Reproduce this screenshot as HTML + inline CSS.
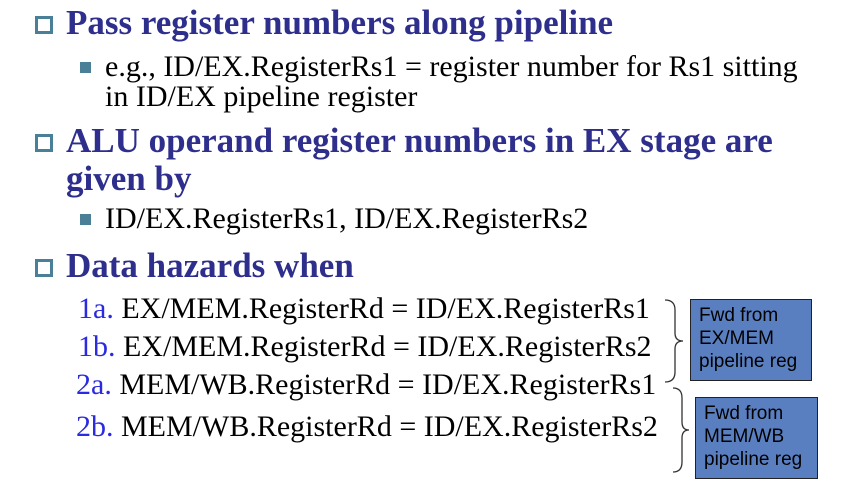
<!DOCTYPE html>
<html><head><meta charset="utf-8"><style>
body{margin:0;width:846px;height:495px;background:#fff;position:relative;overflow:hidden;font-family:"Liberation Serif",serif}
.t{position:absolute;white-space:nowrap;line-height:1}
.h{font-size:35px;font-weight:bold;color:#2e2e8c;left:66px}
.s{font-size:30px;color:#000;left:105px}
.n{font-size:30px;color:#000}
.n b{font-weight:normal;color:#2a2ae0}
.hb{position:absolute;left:35px;width:12px;height:12px;border:3px solid #4a8097;background:#fff}
.sb{position:absolute;left:80px;width:11px;height:11px;background:#4a8097}
.box{position:absolute;background:#5a7fc0;border:1.5px solid #222;font-family:"Liberation Sans",sans-serif;font-size:19px;line-height:23px;color:#000;padding:4px 0 0 8px;box-sizing:border-box}
</style></head><body>
<div class="hb" style="top:16px"></div>
<div class="t h" style="top:5px">Pass register numbers along pipeline</div>
<div class="sb" style="top:62px"></div>
<div class="t s" style="top:52px">e.g., ID/EX.RegisterRs1 = register number for Rs1 sitting</div>
<div class="t s" style="top:82px">in ID/EX pipeline register</div>
<div class="hb" style="top:134px"></div>
<div class="t h" style="top:123px">ALU operand register numbers in EX stage are</div>
<div class="t h" style="top:161px">given by</div>
<div class="sb" style="top:214px"></div>
<div class="t s" style="top:204px">ID/EX.RegisterRs1, ID/EX.RegisterRs2</div>
<div class="hb" style="top:259px"></div>
<div class="t h" style="top:248px">Data hazards when</div>
<div class="t n" style="top:294px;left:78px"><b>1a.</b> EX/MEM.RegisterRd = ID/EX.RegisterRs1</div>
<div class="t n" style="top:332px;left:78px"><b>1b.</b> EX/MEM.RegisterRd = ID/EX.RegisterRs2</div>
<div class="t n" style="top:370px;left:76px"><b>2a.</b> MEM/WB.RegisterRd = ID/EX.RegisterRs1</div>
<div class="t n" style="top:412px;left:76px"><b>2b.</b> MEM/WB.RegisterRd = ID/EX.RegisterRs2</div>
<svg style="position:absolute;left:0;top:0" width="846" height="495">
<path d="M665 300 Q675 300 675 310 L675 333 Q675 341 683 341 Q675 341 675 349 L675 372 Q675 382 665 382" fill="none" stroke="#333" stroke-width="1.3"/>
<path d="M673 388 Q682 388 682 398 L682 422 Q682 430 689 430 Q682 430 682 438 L682 462 Q682 472 673 472" fill="none" stroke="#333" stroke-width="1.3"/>
</svg>
<div class="box" style="left:690px;top:299px;width:122px;height:82px">Fwd from<br>EX/MEM<br>pipeline reg</div>
<div class="box" style="left:695px;top:397px;width:123px;height:82px">Fwd from<br>MEM/WB<br>pipeline reg</div>
</body></html>
